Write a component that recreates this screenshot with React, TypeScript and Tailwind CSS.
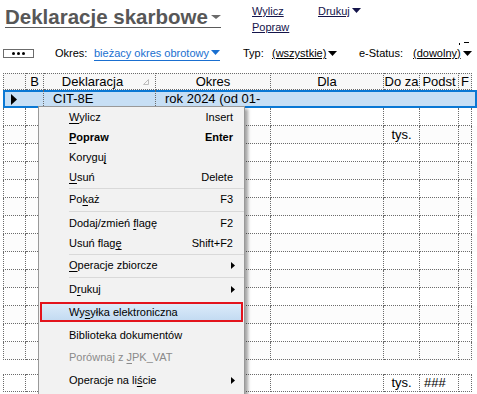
import React from "react";

const COLS = "grid grid-cols-[23px_18px_112px_115px_113px_36px_39px_13px]";
const DOT = "border-dotted border-[#6b6b6b]";

function Caret({ className = "" }: { className?: string }) {
  return (
    <svg width="9" height="5" viewBox="0 0 9 5" className={className}>
      <path d="M0 0h9L4.5 5z" fill="currentColor" />
    </svg>
  );
}

function SubArrow() {
  return (
    <svg width="4" height="7" viewBox="0 0 4 7">
      <path d="M0 0l4 3.5L0 7z" fill="#000" />
    </svg>
  );
}

function Mn({ t, u }: { t: string; u?: number }) {
  if (u === undefined) return <span>{t}</span>;
  return (
    <span>
      {t.slice(0, u)}
      <span className="underline underline-offset-[2px]">{t[u]}</span>
      {t.slice(u + 1)}
    </span>
  );
}

type Item =
  | { sep: number; line?: boolean }
  | { t: string; u?: number; k?: string; bold?: boolean; sub?: boolean; off?: boolean; h?: number; hot?: boolean };

const items: Item[] = [
  { t: "Wylicz", u: 0, k: "Insert" },
  { t: "Popraw", u: 0, k: "Enter", bold: true },
  { t: "Koryguj", u: 6 },
  { t: "Usuń", u: 0, k: "Delete" },
  { sep: 2, line: true },
  { t: "Pokaż", u: 2, k: "F3" },
  { sep: 4, line: true },
  { t: "Dodaj/zmień flagę", u: 12, k: "F2" },
  { t: "Usuń flagę", u: 9, k: "Shift+F2" },
  { sep: 2, line: true },
  { t: "Operacje zbiorcze", u: 0, sub: true },
  { sep: 4, line: true },
  { t: "Drukuj", u: 1, sub: true },
  { sep: 3 },
  { t: "Wysyłka elektroniczna", u: 2, hot: true },
  { sep: 2 },
  { t: "Biblioteka dokumentów", h: 22 },
  { t: "Porównaj z JPK_VAT", u: 11, off: true, h: 22 },
  { sep: 2 },
  { t: "Operacje na liście", u: 14, sub: true },
];

function ContextMenu() {
  return (
    <div className="absolute left-[38px] top-[106px] w-[207px] h-[300px] bg-[#f2f2f2] border border-[#999999] shadow-[3px_3px_3px_rgba(0,0,0,0.35)] text-[11px] leading-[14px]">
      {items.map((it, i) => {
        if ("sep" in it) {
          return (
            <div key={i} className="flex items-center pl-[30px]" style={{ height: it.sep }}>
              {it.line && <div className="h-px w-full bg-[#d9d9d9]" />}
            </div>
          );
        }
        const h = it.h ?? 20;
        if (it.hot) {
          return (
            <div
              key={i}
              className="ml-[1px] mr-[1px] h-[20px] flex items-center pl-[27px] border-2 border-[#e3141d] bg-linear-to-b from-[#dcebf9] to-[#c3dbf2]"
            >
              <Mn t={it.t} u={it.u} />
            </div>
          );
        }
        return (
          <div
            key={i}
            className={`flex items-center justify-between pl-[30px] ${it.sub ? "pr-[9px]" : "pr-[11px]"} ${it.bold ? "font-bold" : ""} ${it.off ? "text-[#8a8a8a]" : "text-black"}`}
            style={{ height: h }}
          >
            <Mn t={it.t} u={it.u} />
            {it.k && <span>{it.k}</span>}
            {it.sub && <SubArrow />}
          </div>
        );
      })}
    </div>
  );
}

function Row({ cells, className = "", top = false }: { cells: React.ReactNode[]; className?: string; top?: boolean }) {
  return (
    <div className={`${COLS} ${className}`}>
      {cells.map((c, i) => (
        <div
          key={i}
          className={`h-[18px] border-r border-b ${top ? "border-t" : ""} ${i === 0 ? "border-l" : ""} ${DOT} flex items-center overflow-hidden whitespace-nowrap`}
        >
          {c}
        </div>
      ))}
    </div>
  );
}

export default function App() {
  const empty = Array.from({ length: 8 }, () => null);
  const rows = Array.from({ length: 14 }, (_, i) => i);
  return (
    <div className="relative w-[477px] h-[394px] overflow-hidden bg-white text-black font-['Liberation_Sans',Arial,sans-serif]">
      {/* title bar */}
      <div className="flex h-[45px]">
        <div className="w-[252px] pl-[5px] pt-[6px]">
          <div className="inline-flex items-center gap-[3px] h-[22px] border-b border-[#5a5a5a] text-[20.5px] leading-[22px] font-bold text-[#575757]">
            Deklaracje skarbowe
            <svg width="10" height="4" viewBox="0 0 10 4" className="mt-[1px]">
              <path d="M0 0h10L5 4z" fill="#6a6a6a" />
            </svg>
          </div>
        </div>
        <div className="w-[66px] pt-[3px] text-[11px] leading-[16px] text-[#14144a]">
          <div className="underline">Wylicz</div>
          <div className="underline">Popraw</div>
        </div>
        <div className="pt-[3px] text-[11px] leading-[16px] text-[#14144a] flex items-start">
          <span className="underline">Drukuj</span>
          <Caret className="ml-[2px] mt-[5px]" />
        </div>
      </div>

      {/* filters */}
      <div className="flex h-[16px] items-center text-[11px] leading-[16px]">
        <div className="w-[55px] pl-[3px] flex items-center">
          <div className="w-[31px] h-[9px] border border-[#6b6b6b] flex items-center justify-center gap-[2px]">
            <span className="w-[3px] h-[3px] rounded-full bg-black" />
            <span className="w-[3px] h-[3px] rounded-full bg-black" />
            <span className="w-[3px] h-[3px] rounded-full bg-black" />
          </div>
        </div>
        <div className="w-[39px]">Okres:</div>
        <div className="w-[149px]">
          <span className="inline-flex items-center gap-[2px] h-[16px] border-b border-[#1a6fd0] text-[#1a6fd0]">
            bieżacy okres obrotowy
            <Caret />
          </span>
        </div>
        <div className="w-[29px]">Typ:</div>
        <div className="w-[87px] flex items-center">
          <span className="underline">(wszystkie)</span>
          <Caret className="ml-[2px]" />
        </div>
        <div className="w-[54px]">e-Status:</div>
        <div className="flex items-center">
          <span className="underline">(dowolny)</span>
          <span className="relative ml-[2px] flex items-center">
            <span className="absolute left-[-4px] top-[-8px] w-px h-[2px] bg-black" />
            <span className="absolute left-[1px] top-[-9px] w-[5px] h-px bg-black" />
            <Caret />
          </span>
        </div>
      </div>

      {/* grid */}
      <div className="mt-[12px] ml-[3px] text-[13px] leading-[16px]">
        <div className={COLS}>
          {["", "B", "Deklaracja", "Okres", "Dla", "Do za", "Podst", "F"].map((h, i) => (
            <div
              key={i}
              className={`h-[17px] border-t border-r border-b ${i === 0 ? "border-l" : ""} ${DOT} bg-[#f8f8f8] flex items-center justify-center whitespace-nowrap overflow-hidden relative`}
            >
              {i === 2 ? <span className="mr-[14px]">{h}</span> : h}
              {i === 2 && (
                <svg width="6" height="6" viewBox="0 0 6 6" className="absolute right-[6px] top-[5px]">
                  <path d="M5.5 0.5V5.5H0.5z" fill="none" stroke="#bdbdbd" />
                </svg>
              )}
            </div>
          ))}
        </div>

        <div className={`${COLS} h-[18px] bg-[#c7dff5] shadow-[inset_0_0_0_2px_#0a78d4]`}>
          <div className="flex items-center pl-[8px]">
            <svg width="6" height="11" viewBox="0 0 6 11">
              <path d="M0 0l6 5.5L0 11z" fill="#000" />
            </svg>
          </div>
          <div className={`border-r ${DOT}`} />
          <div className={`border-r ${DOT} flex items-center pl-[9px]`}>CIT-8E</div>
          <div className="col-span-5 flex items-center pl-[9px] whitespace-nowrap">rok 2024 (od 01-</div>
        </div>

        {rows.map((r) => (
          <Row
            key={r}
            className={r % 2 === 1 ? "bg-[#fcfcfc]" : ""}
            cells={empty.map((_, ci) =>
              r === 1 && ci === 5 ? (
                <span key={ci} className="w-full text-center">tys.</span>
              ) : null
            )}
          />
        ))}

        <div className="mt-[14px]">
          <Row
            top
            cells={empty.map((_, ci) =>
              ci === 5 ? (
                <span key={ci} className="w-full text-center">tys.</span>
              ) : ci === 6 ? (
                <span key={ci} className="pl-[4px]">###</span>
              ) : null
            )}
          />
        </div>
      </div>

      <ContextMenu />
    </div>
  );
}
